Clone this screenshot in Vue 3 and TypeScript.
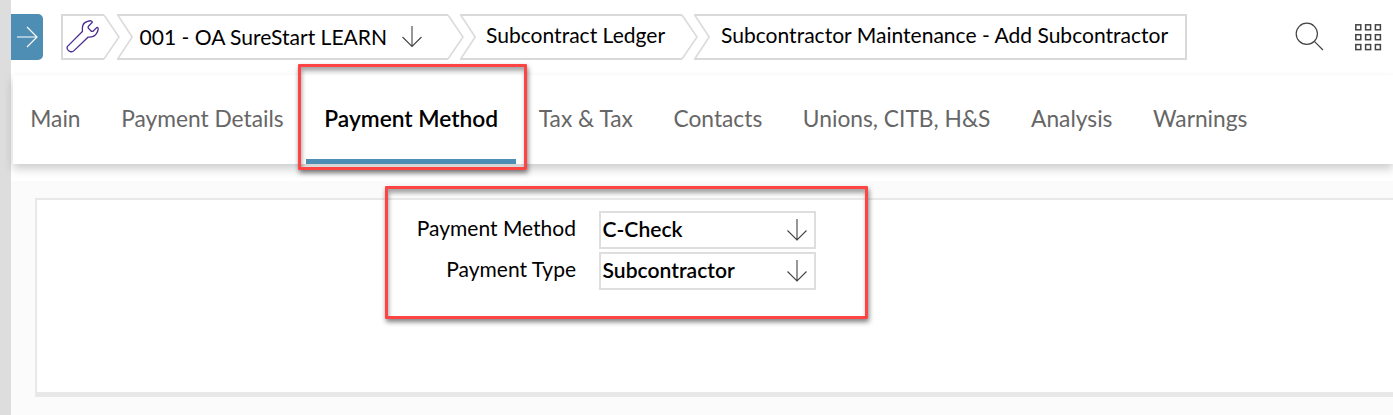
<script setup lang="ts">
interface Crumb { key: string; label: string; width: number; notch: boolean; tip: boolean }
const crumbs: Crumb[] = [
  { key: 'tools', label: '', width: 59, notch: false, tip: true },
  { key: 'company', label: '001 - OA SureStart LEARN', width: 347, notch: true, tip: true },
  { key: 'ledger', label: 'Subcontract Ledger', width: 238, notch: true, tip: true },
  { key: 'current', label: 'Subcontractor Maintenance - Add Subcontractor', width: 493, notch: true, tip: false },
]
const horizontal = (c: Crumb): string => {
  const end = c.tip ? c.width - 16 : c.width
  return `M0 1H${end}M0 45H${end}` + (c.notch ? '' : 'M1 0V46') + (c.tip ? '' : `M${c.width - 1} 0V46`)
}
const slanted = (c: Crumb): string =>
  (c.notch ? 'M0.7 1L15.2 23L0.7 45' : '') +
  (c.tip ? `M${c.width - 16} 1L${c.width - 1} 23L${c.width - 16} 45` : '')

const tabs = ['Main', 'Payment Details', 'Payment Method', 'Tax & Tax', 'Contacts', 'Unions, CITB, H&S', 'Analysis', 'Warnings']
const activeTab = 'Payment Method'
const fields = [
  { label: 'Payment Method', value: 'C-Check' },
  { label: 'Payment Type', value: 'Subcontractor' },
]
</script>

<template>
  <div class="app">
    <aside class="rail"></aside>
    <main class="content">
      <header class="topbar">
        <button class="expand" aria-label="Expand menu">
          <svg width="32" height="46" viewBox="0 0 32 46"><path d="M6 23H26M16 13L26 23L16 33" /></svg>
        </button>
        <nav class="crumbs">
          <div v-for="c in crumbs" :key="c.key" class="crumb" :class="c.key">
            <svg class="outline" :width="c.width" height="46">
              <path :d="horizontal(c)" stroke="#d9d9d9" stroke-width="2" />
              <path :d="slanted(c)" stroke="#dcdcdc" stroke-width="1.7" />
            </svg>
            <svg v-if="c.key === 'tools'" class="wrench" width="34" height="34" viewBox="0 0 34 34">
              <path d="M1.8 26.1L16.4 11.5V7.6Q16.8 2.7 21.3 1.5Q25.8-.3 26.3 2.2L22.2 6.5V8.1L25.4 11.3H27L31 7.4C33 7.6 32 11 30.7 13.1C29.3 16.2 26.3 17.4 22 17.2L8.3 30.4C5.6 33 2.6 31.4 1.4 29.2Q.6 27.2 1.8 26.1Z" />
            </svg>
            <span v-if="c.label">{{ c.label }}</span>
            <svg v-if="c.key === 'company'" class="arrow" width="20" height="22" viewBox="0 0 20 22"><path d="M10 0V20.5M.5 11L10 20.5L19.5 11" /></svg>
          </div>
        </nav>
        <svg class="search" width="30" height="30" viewBox="0 0 30 30"><circle cx="11.8" cy="11.8" r="10.6" /><path d="M19.3 19.3L28 28" /></svg>
        <svg class="grid" width="27" height="27" viewBox="0 0 27 27">
          <template v-for="r in 3" :key="r">
            <rect v-for="c in 3" :key="c" :x="c * 9.8 - 9" :y="r * 9.9 - 9.1" width="5" height="5" />
          </template>
        </svg>
      </header>
      <nav class="tabs">
        <div v-for="t in tabs" :key="t" class="tab" :class="{ active: t === activeTab }">
          <span>{{ t }}</span>
          <div v-if="t === activeTab" class="callout callout-tab"></div>
        </div>
      </nav>
      <section class="page">
        <div class="panel">
          <div class="form">
            <div v-for="f in fields" :key="f.label" class="field">
              <label>{{ f.label }}</label>
              <div class="select">
                <span>{{ f.value }}</span>
                <svg class="arrow" width="20" height="22" viewBox="0 0 20 22"><path d="M10 0V21.5M.5 11.5L10 21L19.5 11.5" /></svg>
              </div>
            </div>
            <div class="callout callout-form"></div>
          </div>
        </div>
      </section>
    </main>
  </div>
</template>

<style>
body { overflow: hidden; background: #fff; }
</style>

<style scoped>
* { box-sizing: border-box; }
.app { display: flex; width: 1393px; height: 415px; font-family: Lato, "Liberation Sans", sans-serif; color: #000; }
.rail { width: 11px; background: #ddd; flex: none; }
.content { flex: 1; min-width: 0; display: flex; flex-direction: column; background: #fff; }
.topbar { height: 75px; flex: none; display: flex; padding-top: 14px; }
svg { display: block; fill: none; flex: none; }
.expand { width: 32px; height: 46px; padding: 0; border: 0; border-radius: 0 5px 5px 0; background: #4e8eb4; flex: none; }
.expand path { stroke: #fff; stroke-width: 1.2; }
.crumbs { display: flex; margin-left: 18px; height: 46px; }
.crumb { position: relative; display: flex; font-size: 21.05px; line-height: 41px; white-space: nowrap; }
.crumb.company { margin-left: -3px; }
.crumb.ledger, .crumb.current { margin-left: -4px; }
.crumb span { position: absolute; top: 0; left: 26px; }
.crumb.company span { left: 22.5px; top: 2px; }
.crumb.current span { left: 27px; }
.wrench { position: absolute; left: 5px; top: 6px; stroke: #4b2c91; stroke-width: 1.3; }
.arrow path { stroke: #444; stroke-width: 1.1; }
.crumb .arrow { position: absolute; left: 285px; top: 12px; }
.search { margin: 8px 0 0 108px; stroke: #444; stroke-width: 1.2; }
.grid { margin: 10px 0 0 30px; stroke: #444; stroke-width: 1.5; }
.tabs { position: relative; z-index: 1; height: 89px; flex: none; margin-left: 2px; display: flex; gap: 4.6px; background: #fff; box-shadow: 0 5px 9px rgba(0, 0, 0, .2); }
.tab { position: relative; padding: 0 18px; height: 89px; line-height: 88px; font-size: 22.75px; color: #666; white-space: nowrap; border-bottom: 5px solid transparent; }
.tab:first-child { padding-left: 17.3px; }
.tab.active { color: #000; font-weight: 600; border-color: #4e8eb4; }
.callout { position: absolute; border: 3px solid #ff4444; border-radius: 1px; box-shadow: 1px 3px 5px rgba(0, 0, 0, .5), inset 1px 4px 4px rgba(0, 0, 0, .35); }
.callout-tab { left: -8px; top: -11px; width: 229px; height: 106px; }
.page { margin-top: 17px; flex: 1; padding: 17px 0 0 24px; background: #fbfbfb; }
.panel { height: 199px; border: 2px solid #e8e8e8; border-right: 0; border-bottom-width: 5px; background: #fff; padding: 11px 0 0 348px; }
.form { position: relative; width: 482px; display: flex; flex-direction: column; gap: 3px; }
.field { display: flex; height: 38px; }
.field label { width: 191px; text-align: right; font-size: 21px; line-height: 33px; white-space: nowrap; }
.select { margin-left: 23px; width: 217px; height: 38px; border: 2px solid #dedede; padding: 0 7px 0 1.5px; display: flex; justify-content: space-between; align-items: center; font-size: 21.1px; font-weight: 600; line-height: 32px; }
.select span { padding-bottom: 2px; }
.callout-form { left: 0; top: -25px; width: 483px; height: 133px; }
</style>
